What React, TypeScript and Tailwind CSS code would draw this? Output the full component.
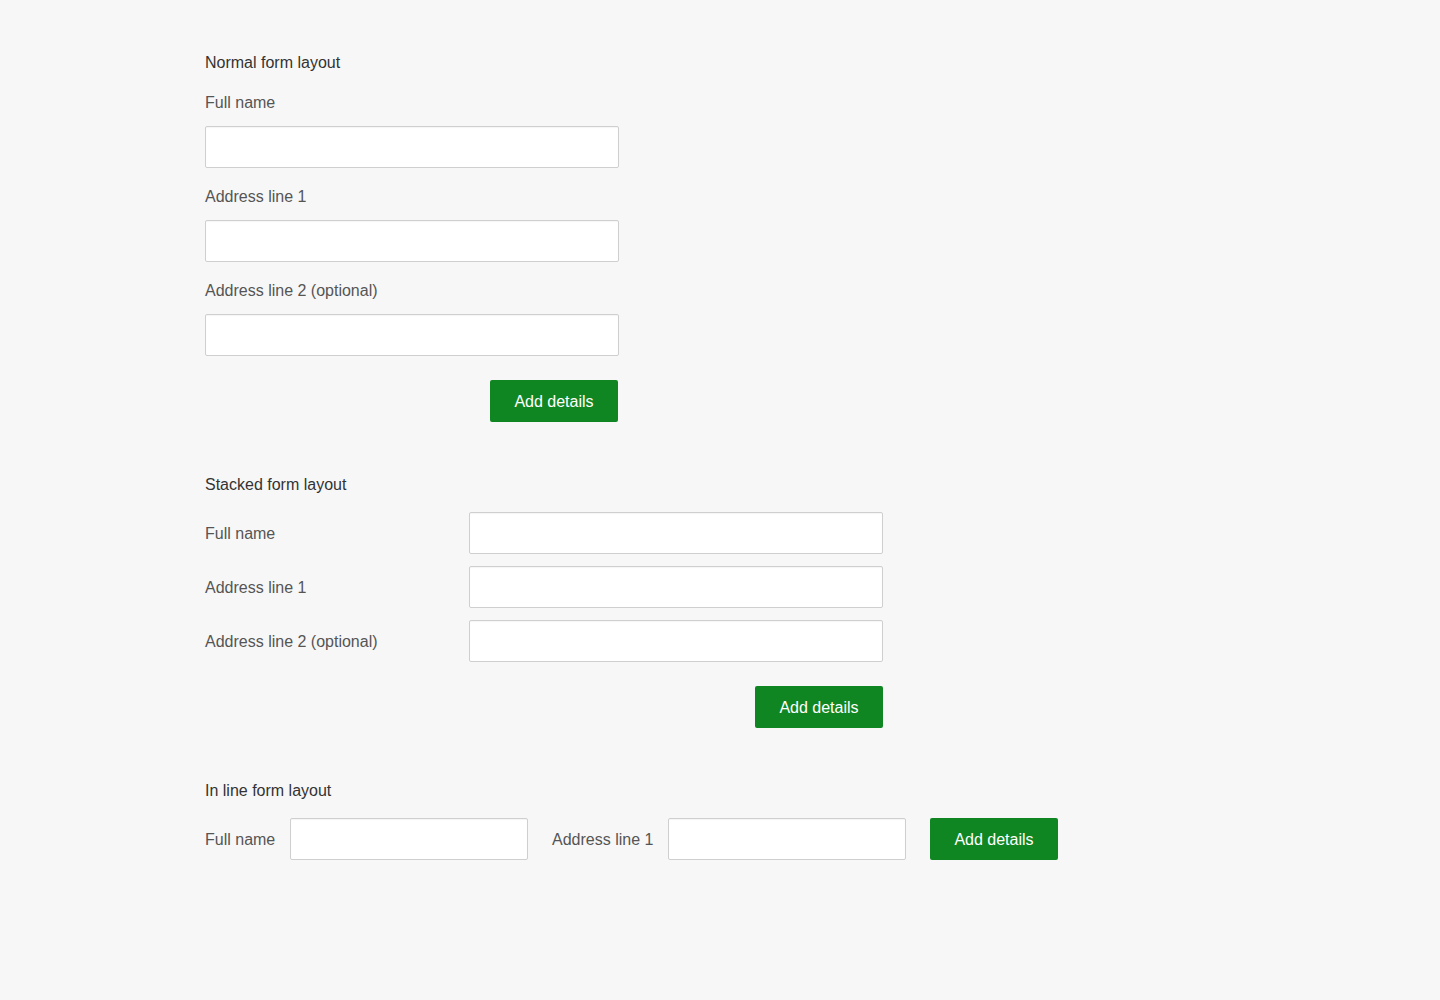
const font = { fontFamily: '"Liberation Sans", Arial, sans-serif' }

function Heading({ children }: { children: React.ReactNode }) {
  return <h2 className="pt-px text-[16px] leading-6 font-medium text-[#333]">{children}</h2>
}

function Label({ children, className = '' }: { children: React.ReactNode; className?: string }) {
  return <label className={'whitespace-nowrap text-[16px] leading-6 text-[#555] ' + className}>{children}</label>
}

function Input({ className = 'w-[414px]' }: { className?: string }) {
  return <input type="text" className={'h-[42px] shrink-0 bg-white border border-[#cfcfcf] rounded-[2px] outline-none shadow-[inset_0_1px_1px_rgba(0,0,0,0.04)] ' + className} />
}

function AddButton() {
  return (
    <button className="h-[42px] w-[128px] rounded-[2px] bg-[#108623] pt-px text-white text-[16px] leading-6">
      Add details
    </button>
  )
}

export default function App() {
  const fields = ['Full name', 'Address line 1', 'Address line 2 (optional)']
  return (
    <div className="min-h-screen bg-[#f7f7f7] pl-[205px] pt-[50px]" style={font}>
      <section className="w-[414px]">
        <Heading>Normal form layout</Heading>
        <div className="mt-[15px] flex flex-col gap-4">
          {fields.map(f => (
            <div key={f} className="flex flex-col gap-[11px]">
              <Label className="pt-px">{f}</Label>
              <Input />
            </div>
          ))}
        </div>
        <div className="mt-6 flex justify-end pr-px">
          <AddButton />
        </div>
      </section>

      <section className="mt-[50px] w-[678px]">
        <Heading>Stacked form layout</Heading>
        <div className="mt-[15px] flex flex-col gap-3">
          {fields.map(f => (
            <div key={f} className="flex items-center">
              <Label className="w-[264px] pt-[2px]">{f}</Label>
              <Input />
            </div>
          ))}
        </div>
        <div className="mt-6 flex justify-end">
          <AddButton />
        </div>
      </section>

      <section className="mt-[50px]">
        <Heading>In line form layout</Heading>
        <div className="mt-[15px] flex items-center">
          <Label className="w-[68px] pt-[2px]">Full name</Label>
          <Input className="ml-[17px] w-[238px]" />
          <Label className="ml-6 w-[99px] pt-[2px]">Address line 1</Label>
          <Input className="ml-[17px] w-[238px]" />
          <div className="ml-6">
            <AddButton />
          </div>
        </div>
      </section>
    </div>
  )
}
